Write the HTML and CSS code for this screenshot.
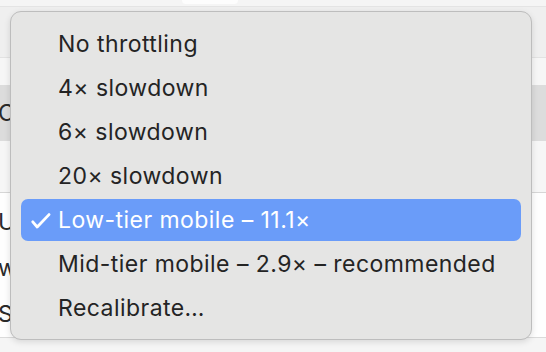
FILE: index.html
```html
<!DOCTYPE html>
<html lang="en">
<head>
<meta charset="utf-8">
<title>Throttling menu</title>
<link rel="stylesheet" href="styles.css">
</head>
<body>
<div class="page">
  <div class="toolbar">
    <div class="tab"></div>
  </div>
  <div class="band band-gray"></div>
  <div class="band band-light"></div>
  <div class="band band-dark"><span class="peek">Co</span></div>
  <div class="band band-light2"></div>
  <div class="list">
    <div class="list-row"><span class="peek">U</span></div>
    <div class="list-row"><span class="peek">w</span></div>
    <div class="list-row"><span class="peek">S</span></div>
  </div>
  <div class="footer"></div>

  <div class="menu">
    <div class="item">No throttling</div>
    <div class="item">4× slowdown</div>
    <div class="item">6× slowdown</div>
    <div class="item">20× slowdown</div>
    <div class="item selected">
      <svg class="check" width="20" height="16" viewBox="0 0 20 16"><path d="M1.8 8.8 L6.2 14 L18 1.6" fill="none" stroke="#fff" stroke-width="2.8" stroke-linecap="round" stroke-linejoin="round"/></svg>
      Low-tier mobile – 11.1×
    </div>
    <div class="item">Mid-tier mobile – 2.9× – recommended</div>
    <div class="item">Recalibrate…</div>
  </div>
</div>
</body>
</html>
```
FILE: styles.css
```css
html, body {
  margin: 0;
  padding: 0;
}
body {
  width: 546px;
  height: 352px;
  overflow: hidden;
  font-family: Inter, "Noto Sans", "Liberation Sans", sans-serif;
  background: #f6f6f6;
}
.page {
  position: relative;
  width: 546px;
  height: 352px;
  display: flex;
  flex-direction: column;
}
.toolbar {
  height: 6px;
  background: #f5f5f5;
  border-bottom: 1px solid #e4e4e4;
  position: relative;
}
.tab {
  margin-left: 182px;
  width: 56px;
  height: 4px;
  background: #fdfdfd;
  border-radius: 0 0 6px 6px;
}
.band { flex: none; }
.band-gray {
  height: 50px;
  background: #efefef;
  border-bottom: 1px solid #e2e2e2;
}
.band-light {
  height: 27px;
  background: #f6f6f6;
}
.band-dark {
  height: 56px;
  background: #dcdcdc;
  display: flex;
  align-items: center;
}
.band-light2 {
  height: 51px;
  background: #f6f6f6;
  border-bottom: 1px solid #d6d6d6;
}
.peek {
  font-size: 23px;
  color: #2a2a2a;
  margin-left: -2px;
  line-height: 1;
}
.list {
  height: 145px;
  background: #fefefe;
  border-bottom: 1px solid #dadada;
  display: flex;
  flex-direction: column;
  padding-top: 6px;
  box-sizing: border-box;
}
.list-row {
  height: 46px;
  display: flex;
  align-items: center;
}
.footer {
  flex: 1;
  background: #f5f5f5;
}
.menu {
  position: absolute;
  left: 10px;
  top: 11px;
  width: 522px;
  height: 329px;
  box-sizing: border-box;
  background: #e5e5e4;
  border: 1px solid #bdbdbd;
  border-radius: 11px;
  box-shadow: 0 2px 6px rgba(0,0,0,0.12);
  padding: 11px 10px 10px;
  display: flex;
  flex-direction: column;
  gap: 2px;
}
.item {
  position: relative;
  height: 42px;
  flex: none;
  display: flex;
  align-items: center;
  padding-left: 37px;
  font-size: 23px;
  letter-spacing: 0.45px;
  color: #242424;
  border-radius: 7px;
  white-space: nowrap;
}
.item.selected {
  background: #6a9cf9;
  color: #ffffff;
}
.check {
  position: absolute;
  left: 10px;
  top: 14px;
}
```
